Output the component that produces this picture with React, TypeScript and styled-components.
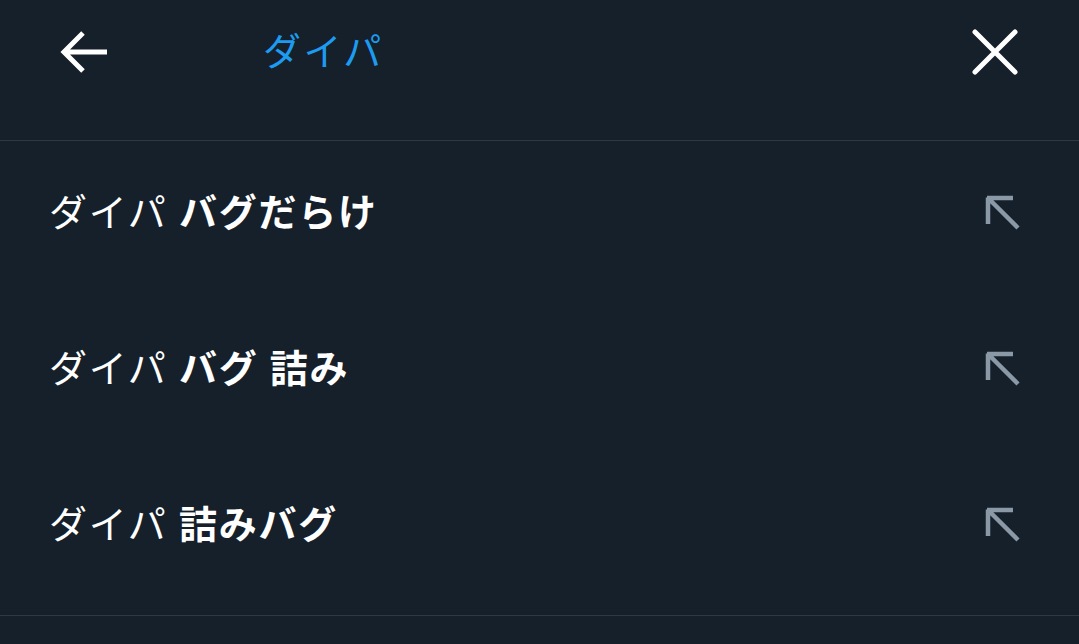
import React from "react";
import styled, { createGlobalStyle } from "styled-components";

const Global = createGlobalStyle`
  html, body { margin: 0; padding: 0; background: #15202b; }
  body { font-family: Roboto, "Noto Sans CJK JP", sans-serif; }
`;

const Page = styled.div`
  width: 1079px;
  height: 644px;
  background: #15202b;
  display: flex;
  flex-direction: column;
  overflow: hidden;
`;

const Header = styled.header`
  height: 141px;
  border-bottom: 1px solid #2e3945;
  display: flex;
  align-items: center;
  padding: 0 58px 37px 58px;
  box-sizing: border-box;
`;

const IconButton = styled.button`
  width: 52px;
  height: 52px;
  padding: 0;
  border: 0;
  background: transparent;
  display: flex;
  align-items: center;
  justify-content: center;
  color: #ffffff;
`;

const Title = styled.div`
  flex: 1;
  margin-left: 153px;
  font-family: Roboto, "Noto Sans CJK JP", sans-serif;
  font-size: 38px;
  color: #1d9bf0;
  line-height: 1;
  letter-spacing: 2.5px;
`;

const List = styled.ul`
  list-style: none;
  margin: 0;
  padding: 0 0 6px 0;
  border-bottom: 1px solid #2e3945;
`;

const Row = styled.li`
  height: 156px;
  display: flex;
  align-items: flex-start;
  padding: 50px 56px 0 49px;
  box-sizing: border-box;
`;

const Text = styled.div`
  flex: 1;
  font-family: Roboto, "Noto Sans CJK JP", sans-serif;
  font-size: 38px;
  line-height: 44px;
  color: #ffffff;
  letter-spacing: 1.8px;
`;

const Strong = styled.span`
  font-weight: 700;
  letter-spacing: 1.8px;
`;

const Fill = styled.div`
  flex: 1;
  background: #15202b;
`;

const ArrowSlot = styled.div`
  width: 40px;
  height: 40px;
  margin-top: 2px;
  display: flex;
  align-items: center;
  justify-content: center;
`;

const BackIcon = () => (
  <svg width="52" height="52" viewBox="0 0 52 52" fill="none">
    <path d="M49 26H7M25 7L6 26l19 19" stroke="#fff" strokeWidth="5" strokeLinecap="butt" strokeLinejoin="miter" />
  </svg>
);

const CloseIcon = () => (
  <svg width="48" height="48" viewBox="0 0 48 48" fill="none">
    <path d="M4 4L44 44M44 4L4 44" stroke="#fff" strokeWidth="5" strokeLinecap="round" />
  </svg>
);

const UpLeftIcon = () => (
  <svg width="36" height="36" viewBox="0 0 36 36" fill="none">
    <path d="M3 3L33 33M3 2.5V29M2 3H28" stroke="#8b98a5" strokeWidth="4.5" />
  </svg>
);

const items: { light: string; bold: string }[] = [
  { light: "ダイパ ", bold: "バグだらけ" },
  { light: "ダイパ ", bold: "バグ 詰み" },
  { light: "ダイパ ", bold: "詰みバグ" },
];

export default function App() {
  return (
    <Page>
      <Global />
      <Header>
        <IconButton aria-label="戻る">
          <BackIcon />
        </IconButton>
        <Title>ダイパ</Title>
        <IconButton aria-label="閉じる">
          <CloseIcon />
        </IconButton>
      </Header>
      <List>
        {items.map((it, i) => (
          <Row key={i}>
            <Text>
              {it.light}
              <Strong>{it.bold}</Strong>
            </Text>
            <ArrowSlot>
              <UpLeftIcon />
            </ArrowSlot>
          </Row>
        ))}
      </List>
      <Fill />
    </Page>
  );
}
